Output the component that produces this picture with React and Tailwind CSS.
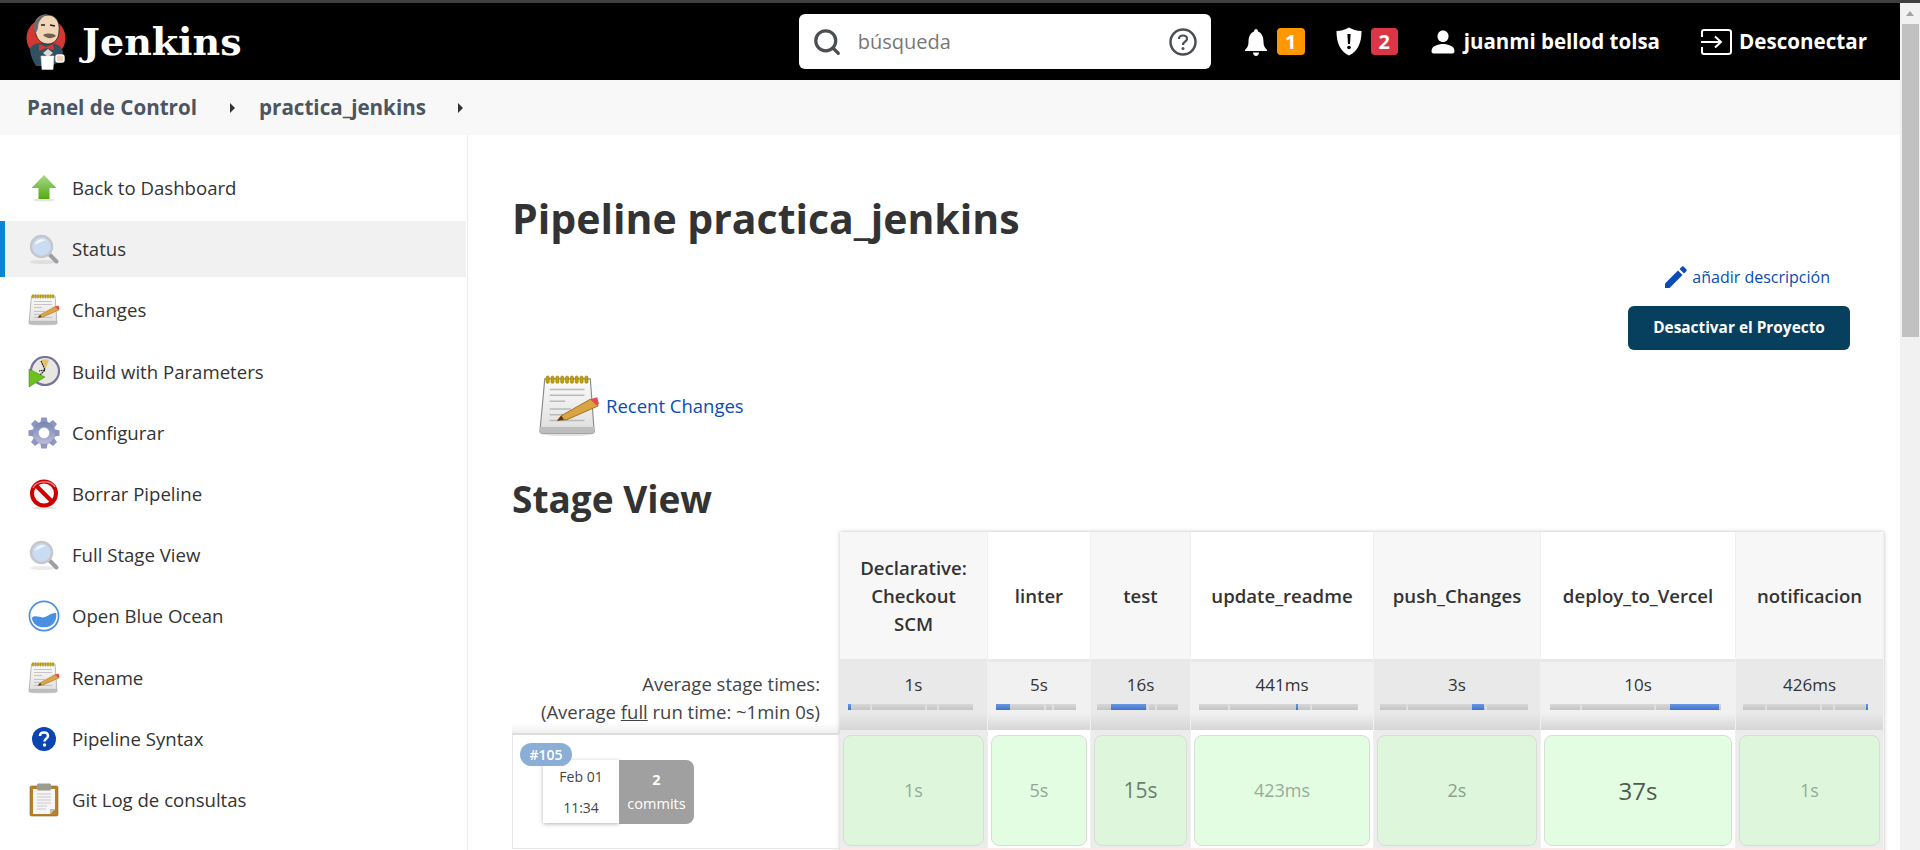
import React from "react";
import { Search } from "lucide-react";

const FONT = "font-['Open_Sans','Noto_Sans',sans-serif]";

function JenkinsLogo() {
  return (
    <svg width="40" height="56" viewBox="0 0 40 56" className="shrink-0">
      <circle cx="20" cy="24" r="19.5" fill="#d33833" />
      <path d="M4 35 C5 31 11 29 15 29 L26 29 C32 30 36 33 37 38 L36 44 C32 49 28 51 24 52 L10 52 C7 47 4 41 4 35Z" fill="#335061" />
      <path d="M9 16 C8 7 14 1 22 1 C30 1 34 8 33 17 C33 25 28 30 22 30 C15 30 10 25 9 16Z" fill="#f0d6b7" stroke="#231f20" strokeWidth="0.8" />
      <path d="M9 19 C5 7 13 -1 22 0.500 C15 3 12 8 12 14 C11 17 10 19 9 19Z" fill="#6d6b6d" />
      <path d="M24 11 L29 12 M15 11 L19 11" stroke="#231f20" strokeWidth="1.4" />
      <path d="M17 21 C21 19 27 19 30 22 C26 25 21 25 17 21Z" fill="#49372c" opacity="0.75" />
      <path d="M13 30 L20 33 L27 30 L28 36 L20 34 L13 37Z" fill="#d33833" />
      <path d="M17 39 L22 35 L27 39 L22 43Z" fill="#dcd9d8" />
      <path d="M15 42 L28 42 L27 55.500 L16 55.500Z" fill="#fff" stroke="#ddd" strokeWidth="0.6" />
      <rect x="30" y="41" width="8" height="7" rx="2" fill="#f0d6b7" stroke="#fff" strokeWidth="1.4" />
    </svg>
  );
}

function UpArrow() {
  return (
    <svg width="32" height="32" viewBox="0 0 32 32">
      <defs>
        <linearGradient id="arrowGreen" x1="0" y1="0" x2="0" y2="1">
          <stop offset="0" stopColor="#a6d98a" />
          <stop offset="1" stopColor="#56a80f" />
        </linearGradient>
      </defs>
      <path d="M16 3 L28.5 16 L21.5 16 L21.5 27 L10.5 27 L10.5 16 L3.500 16Z" fill="url(#arrowGreen)" />
      <ellipse cx="16" cy="28" rx="11" ry="1.500" fill="#000" opacity="0.1" />
    </svg>
  );
}

function Magnifier({ size = 32 }) {
  return (
    <svg width={size} height={size} viewBox="0 0 32 32">
      <ellipse cx="15" cy="29" rx="13" ry="2" fill="#000" opacity="0.08" />
      <path d="M20.5 20.5 L28.500 28.500" stroke="#9c9fa3" strokeWidth="4" strokeLinecap="round" />
      <circle cx="13.500" cy="13.500" r="10.500" fill="#c9dcf2" stroke="#c4c8cc" strokeWidth="2.500" />
      <path d="M7 12 C8 7 13 5 18 7 C14 8 10 10 7 12Z" fill="#fff" opacity="0.8" />
    </svg>
  );
}

function Notepad({ size = 32 }) {
  const rings = [5, 7.500, 10, 12.500, 15, 17.500, 20, 22.500, 25];
  return (
    <svg width={size} height={size} viewBox="0 0 32 32">
      <defs>
        <linearGradient id={"pad" + size} x1="0" y1="0" x2="0" y2="1">
          <stop offset="0" stopColor="#fbfbfb" />
          <stop offset="1" stopColor="#dedede" />
        </linearGradient>
      </defs>
      <ellipse cx="15" cy="30.500" rx="13" ry="1" fill="#000" opacity="0.12" />
      <path d="M3.500 2 L27 2 L29 29 Q29 30 28 30 L2 30 Q1 30 1 29Z" fill={"url(#pad" + size + ")"} stroke="#8c8c8c" strokeWidth="0.6" />
      <rect x="1" y="26.800" width="28" height="3.200" fill="#bdbdbd" />
      {rings.map((x) => (
        <rect key={x} x={x - 0.8} y="0.500" width="1.600" height="3.800" rx="0.800" fill="#c4a000" stroke="#8f7900" strokeWidth="0.300" />
      ))}
      <path d="M6 7.500 H24 M6 10.500 H24 M6 13.500 H14 M6 17.500 H17 M6 20.500 H13 M6 23.500 H24" stroke="#b9b9b9" strokeWidth="0.800" />
      <path d="M10 23.500 L12 21 L27 12.500 L30.500 14.500 L31 16 L15 23Z" fill="#d9a441" stroke="#8f5902" strokeWidth="0.400" />
      <path d="M27 12.500 L30.500 11.500 L31.500 15 L30 15.500Z" fill="#e5484d" />
      <path d="M10 23.500 L12 21 L13.500 23Z" fill="#4f3a1c" />
    </svg>
  );
}

function ClockPlay() {
  return (
    <svg width="32" height="32" viewBox="0 0 32 32">
      <circle cx="17" cy="15" r="14" fill="#e9e7e1" stroke="#75739a" strokeWidth="2.200" />
      <path d="M17 15 L13 4 A12 12 0 0 1 21 3.700Z" fill="#e3c36a" />
      <path d="M13 5 L17 14 L12 19 M17 14 L11 15" stroke="#222" strokeWidth="1.100" fill="none" strokeDasharray="2 0.500" />
      <path d="M1 13 L17 21 L1 31Z" fill="#6cc21d" stroke="#3f7f0c" strokeWidth="0.500" />
    </svg>
  );
}

function Gear() {
  const teeth = [0, 45, 90, 135, 180, 225, 270, 315];
  return (
    <svg width="34" height="34" viewBox="0 0 34 34">
      <defs>
        <linearGradient id="gearFill" gradientUnits="userSpaceOnUse" x1="0" y1="0" x2="0" y2="34">
          <stop offset="0" stopColor="#6479aa" />
          <stop offset="1" stopColor="#cdc7e3" />
        </linearGradient>
      </defs>
      <g fill="#8f96bf">
        {teeth.map((a) => (
          <path key={a} d="M14 0.500 H20 L21 7 H13Z" transform={`rotate(${a} 17 17)`} />
        ))}
      </g>
      <circle cx="17" cy="17" r="12" fill="url(#gearFill)" stroke="#7f86ad" strokeWidth="0.400" />
      <circle cx="17" cy="17" r="6" fill="#fff" stroke="#8f96bf" strokeWidth="0.600" />
    </svg>
  );
}

function NoEntry() {
  return (
    <svg width="32" height="32" viewBox="0 0 32 32">
      <ellipse cx="16" cy="30" rx="12" ry="1.500" fill="#000" opacity="0.1" />
      <circle cx="16" cy="15.500" r="12" fill="#f7f7f7" stroke="#cc0000" strokeWidth="4" />
      <path d="M8 7.500 L24 23.500" stroke="#cc0000" strokeWidth="4" />
      <path d="M5 10 C8 3 22 1 27 9" stroke="#f28a8a" strokeWidth="1.200" fill="none" />
    </svg>
  );
}

function Ocean() {
  return (
    <svg width="34" height="34" viewBox="0 0 34 34">
      <circle cx="17" cy="17" r="15.500" fill="#fff" stroke="#4a90e2" strokeWidth="1.800" />
      <path d="M4 19 C9 15 13 20 18 18 C23 16 26 13 30 14 C31 22 26 29 17 29 C10 29 5 25 4 19Z" fill="#4a90e2" />
    </svg>
  );
}

function HelpBlue() {
  return (
    <svg width="26" height="26" viewBox="0 0 26 26">
      <circle cx="13" cy="13" r="12" fill="#0b46b0" />
      <path d="M9 10 C9 7.500 11 6.500 13 6.500 C15.500 6.500 17 8 17 10 C17 12.500 13.500 12.500 13.500 15.500" stroke="#fff" strokeWidth="2.500" fill="none" />
      <circle cx="13.500" cy="19" r="1.700" fill="#fff" />
    </svg>
  );
}

function Clipboard() {
  return (
    <svg width="32" height="34" viewBox="0 0 32 34">
      <rect x="2" y="3" width="28" height="30" rx="1.500" fill="#b5812f" stroke="#8f6420" strokeWidth="0.600" />
      <path d="M5 6 H27 V26 L22 31 H5Z" fill="#f6f6f6" />
      <path d="M27 26 L22 31 L22 26Z" fill="#bbb" />
      <rect x="9" y="0.500" width="14" height="7" rx="1.500" fill="#9c9c90" />
      <path d="M9 11 H23 M9 14 H23 M9 17 H23 M9 20 H23 M9 23 H19 M9 26 H18" stroke="#c8c8c8" strokeWidth="1" />
    </svg>
  );
}

function BellIcon() {
  return (
    <svg width="24" height="28" viewBox="0 0 24 28" fill="#fff">
      <path d="M12 1 C13 1 14 2 14 3.500 C18 5 19.500 9 19.500 14 C19.500 18 21 20 23 22 L23 23 L1 23 L1 22 C3 20 4.500 18 4.500 14 C4.500 9 6 5 10 3.500 C10 2 11 1 12 1Z" />
      <path d="M9 24.500 H15 C15 26.500 13.500 28 12 28 C10.500 28 9 26.500 9 24.500Z" />
    </svg>
  );
}

function ShieldIcon() {
  return (
    <svg width="26" height="29" viewBox="0 0 26 29">
      <path d="M13 0.500 C16 2.500 21 3.800 25.500 4 C25.500 16 22 24 13 28.500 C4 24 0.500 16 0.500 4 C5 3.800 10 2.500 13 0.500Z" fill="#fff" />
      <path d="M11.400 7 H14.600 L14 17 H12Z" fill="#000" />
      <circle cx="13" cy="20.500" r="1.800" fill="#000" />
    </svg>
  );
}

function PersonIcon() {
  return (
    <svg width="24" height="24" viewBox="0 0 24 24" fill="#fff">
      <path d="M12 0.500 C15.300 0.500 17.500 3 17.500 6.200 C17.500 9.500 15.300 12 12 12 C8.700 12 6.500 9.500 6.500 6.200 C6.500 3 8.700 0.500 12 0.500Z" />
      <path d="M12 14 C17 14 23.500 16 23.500 21 C23.500 22.500 22.800 23.500 21.500 23.500 L2.500 23.500 C1.200 23.500 0.500 22.500 0.500 21 C0.500 16 7 14 12 14Z" />
    </svg>
  );
}

function LogoutIcon() {
  return (
    <svg width="32" height="26" viewBox="0 0 32 26" fill="none" stroke="#fff" strokeWidth="2">
      <path d="M2 8 V3 Q2 1 4 1 H28 Q31 1 31 3 V23 Q31 25 28 25 H4 Q2 25 2 23 V18" />
      <path d="M1 13 H20 M15 7.500 L21 13 L15 18.500" />
    </svg>
  );
}

function PencilIcon() {
  return (
    <svg width="22" height="22" viewBox="0 0 22 22" fill="#0b4cb4">
      <path d="M0 17.500 L13 4.500 L17.500 9 L4.500 22 L0 22Z" />
      <path d="M14.500 3 L17 0.500 Q17.800 0 18.500 0.500 L21.500 3.500 Q22 4.200 21.500 5 L19 7.500Z" />
    </svg>
  );
}

function HelpOutline() {
  return (
    <svg width="28" height="28" viewBox="0 0 28 28" fill="none" stroke="#4b4f54" strokeWidth="2.500">
      <circle cx="14" cy="14" r="12.500" />
      <path d="M10 11 C10 8.500 12 7.500 14 7.500 C16.500 7.500 18 9 18 11 C18 13.500 14 13.500 14 17" strokeWidth="2.200" />
      <circle cx="14" cy="20.500" r="1.500" fill="#4b4f54" stroke="none" />
    </svg>
  );
}

const sideItems = [
  { label: "Back to Dashboard", icon: <UpArrow /> },
  { label: "Status", icon: <Magnifier />, active: true },
  { label: "Changes", icon: <Notepad /> },
  { label: "Build with Parameters", icon: <ClockPlay /> },
  { label: "Configurar", icon: <Gear /> },
  { label: "Borrar Pipeline", icon: <NoEntry /> },
  { label: "Full Stage View", icon: <Magnifier /> },
  { label: "Open Blue Ocean", icon: <Ocean /> },
  { label: "Rename", icon: <Notepad /> },
  { label: "Pipeline Syntax", icon: <HelpBlue /> },
  { label: "Git Log de consultas", icon: <Clipboard /> },
];

// left/width of the blue part and tick positions are percent of the bar
const stages = [
  { name: ["Declarative:", "Checkout", "SCM"], width: "w-[148px]", avg: "1s", barLeft: "ml-[8px]", barWidth: "w-[125px]", fill: [0, 2.4], ticks: [17.6, 61.6, 71.2], time: "1s", textCls: "text-[18px] text-[#9aa89a]" },
  { name: ["linter"], width: "w-[103px]", avg: "5s", barLeft: "ml-[8px]", barWidth: "w-[80px]", fill: [0, 17.5], ticks: [60, 70], time: "5s", textCls: "text-[18px] text-[#94a594]" },
  { name: ["test"], width: "w-[100px]", avg: "16s", barLeft: "ml-[6px]", barWidth: "w-[81px]", fill: [17, 43], ticks: [62, 71], time: "15s", textCls: "text-[21px] text-[#6e7e6e]" },
  { name: ["update_readme"], width: "w-[183px]", avg: "441ms", barLeft: "ml-[8px]", barWidth: "w-[159px]", fill: [61, 1.4], ticks: [18, 70], time: "423ms", textCls: "text-[18px] text-[#9aab9a]" },
  { name: ["push_Changes"], width: "w-[167px]", avg: "3s", barLeft: "ml-[6px]", barWidth: "w-[148px]", fill: [62, 8], ticks: [17.6, 71], time: "2s", textCls: "text-[18px] text-[#8d9e8d]" },
  { name: ["deploy_to_Vercel"], width: "w-[195px]", avg: "10s", barLeft: "ml-[9px]", barWidth: "w-[171px]", fill: [70, 29], ticks: [17.6, 61], time: "37s", textCls: "text-[24px] text-[#4f5a4f]" },
  { name: ["notificacion"], width: "w-[148px]", avg: "426ms", barLeft: "ml-[7px]", barWidth: "w-[125px]", fill: [98.6, 1.4], ticks: [17.6, 61.6, 72], time: "1s", textCls: "text-[18px] text-[#9aaa9a]" },
];

function SideItem({ label, icon, active }) {
  return (
    <div className={`flex h-14 mb-[5.2px] items-center ${active ? "bg-[#f1f1f1] border-l-[5px] border-[#0a85d1] pl-[23px]" : "pl-[28px]"}`}>
      <span className="flex w-8 h-8 items-center justify-center shrink-0">{icon}</span>
      <span className="ml-3 text-[18.6px] text-[#333]">{label}</span>
    </div>
  );
}

function Sidebar() {
  return (
    <aside className="w-[468px] h-full shrink-0 border-r border-[#ececec] pt-[25px] pr-px">
      {sideItems.map((item) => (
        <SideItem key={item.label} {...item} />
      ))}
    </aside>
  );
}

function StageColumn({ stage, index }) {
  const odd = index % 2 === 0;
  return (
    <div className={`${stage.width} shrink-0 flex flex-col border-r border-[#f0f0f0] ${odd ? "bg-[#f7f7f7]" : "bg-white"}`}>
      <div className="h-[127px] flex flex-col items-center justify-center text-[18.6px] leading-[28px] font-semibold text-[#333] text-center">
        {stage.name.map((line) => (
          <span key={line}>{line}</span>
        ))}
      </div>
      <div className="h-[3px] bg-[#e8e8e8]" />
      <div className={`h-[68px] flex flex-col bg-gradient-to-b from-75% to-[#d6d6d6] ${odd ? "from-[#e9e9e9]" : "from-[#f1f1f1]"}`}>
        <div className="text-center text-[17px] leading-[22px] mt-[12px] text-[#333]">{stage.avg}</div>
        <div className={`relative h-[6px] mt-[8px] bg-gradient-to-b from-[#d8d8d8] to-[#c4c4c4] ${stage.barLeft} ${stage.barWidth}`}>
          {stage.ticks.map((t) => (
            <span key={t} className="absolute top-0 bottom-0 w-[2px] bg-[#dedede]" style={{ left: t + "%" }} />
          ))}
          <span
            className="absolute top-0 bottom-0 bg-gradient-to-b from-[#6a98e0] to-[#3f73cc]"
            style={{ left: stage.fill[0] + "%", width: stage.fill[1] + "%" }}
          />
        </div>
      </div>
      <div className={`pt-[5px] px-[3px] pb-[2px] ${odd ? "bg-[#ececec]" : "bg-white"}`}>
        <div className={`h-[111px] rounded-lg border border-[#d5e0d3] flex items-center justify-center ${stage.textCls} ${odd ? "bg-[#ddf6dc]" : "bg-[#e3fde2]"}`}>
          {stage.time}
        </div>
      </div>
      <div className="h-10 bg-[#fbe9e9]" />
    </div>
  );
}

function BuildInfo() {
  return (
    <div className="relative h-[116px] border-x border-b border-[#e6e6e6] border-t-2 border-t-[#dcdcdc]">
      <div className="absolute left-[7px] top-[8px] z-10 h-[23px] w-[52px] rounded-full bg-[#8aaed6] text-white text-[14px] font-semibold flex items-center justify-center">
        #105
      </div>
      <div className="flex ml-[30px] mt-[25px]">
        <div className="w-[76px] h-[63px] bg-white shadow-[0_1px_4px_rgba(0,0,0,0.3)] flex flex-col items-center justify-center text-[14px] leading-[31px] text-[#444]">
          <span>Feb 01</span>
          <span>11:34</span>
        </div>
        <div className="w-[75px] h-[64px] bg-[#a0a0a0] rounded-r-lg flex flex-col items-center justify-center text-white text-[14.5px] leading-[24px]">
          <span className="font-bold">2</span>
          <span>commits</span>
        </div>
      </div>
    </div>
  );
}

function StageView() {
  return (
    <div className="flex mt-[8px]">
      <div className="w-[328px] shrink-0">
        <div className="h-[130px]" />
        <div className="h-[71px] bg-gradient-to-b from-white from-85% to-[#f0f0f0] flex flex-col items-end justify-center pr-[20px] text-[18.5px] leading-[28px] text-[#444]">
          <span>Average stage times:</span>
          <span>
            (Average <span className="underline">full</span> run time: ~1min 0s)
          </span>
        </div>
        <BuildInfo />
      </div>
      <div className="flex shadow-[0_0_4px_rgba(0,0,0,0.25)]">
        {stages.map((stage, i) => (
          <StageColumn key={stage.name[0]} stage={stage} index={i} />
        ))}
      </div>
    </div>
  );
}

function Scrollbar() {
  return (
    <div className="w-5 h-full shrink-0 bg-[#f1f1f1] flex flex-col items-center">
      <div className="h-[21px] flex items-center">
        <span className="w-0 h-0 border-x-[4px] border-x-transparent border-b-[5px] border-b-[#a3a3a3]" />
      </div>
      <div className="w-[17px] h-[313px] bg-[#c1c1c1]" />
    </div>
  );
}

export default function App() {
  return (
    <div className={`${FONT} w-[1920px] h-[850px] overflow-hidden bg-white flex flex-col`}>
      <div className="h-[3px] bg-[#3f3f3f] shrink-0" />
      <div className="flex flex-1 min-h-0">
        <div className="flex-1 min-w-0 flex flex-col">
          <header className="h-[77px] shrink-0 bg-black flex items-center text-white">
            <div className="ml-[26px]">
              <JenkinsLogo />
            </div>
            <span className="ml-[16px] font-['DejaVu_Serif',serif] font-bold text-[38px]">Jenkins</span>
            <div className="ml-auto w-[412px] h-[55px] bg-white rounded-md flex items-center text-[#4b4f54]">
              <Search size={30} strokeWidth={2.6} className="ml-[13px]" />
              <span className="ml-[16px] text-[20px] text-[#777]">búsqueda</span>
              <span className="ml-auto mr-[14px] flex">
                <HelpOutline />
              </span>
            </div>
            <div className="ml-[33px]">
              <BellIcon />
            </div>
            <span className="ml-[9px] w-[28px] h-[27px] rounded bg-[#ff9800] flex items-center justify-center text-[20px] font-bold">1</span>
            <div className="ml-[31px]">
              <ShieldIcon />
            </div>
            <span className="ml-[9px] w-[27px] h-[27px] rounded bg-[#dc3545] flex items-center justify-center text-[20px] font-bold">2</span>
            <div className="ml-[33px]">
              <PersonIcon />
            </div>
            <span className="ml-[9px] text-[20.5px] font-bold">juanmi bellod tolsa</span>
            <div className="ml-[40px]">
              <LogoutIcon />
            </div>
            <span className="ml-[7px] mr-[33px] text-[20.6px] font-bold">Desconectar</span>
          </header>
          <nav className="h-[55px] shrink-0 bg-[#f8f8f8] flex items-center text-[20.6px] font-bold text-[#4b5563]">
            <span className="ml-[27px]">Panel de Control</span>
            <span className="ml-[33px] w-0 h-0 border-y-[5px] border-y-transparent border-l-[5px] border-l-[#333]" />
            <span className="ml-[24px]">practica_jenkins</span>
            <span className="ml-[32px] w-0 h-0 border-y-[5px] border-y-transparent border-l-[5px] border-l-[#333]" />
          </nav>
          <div className="flex flex-1 min-h-0">
            <Sidebar />
            <main className="flex-1 min-w-0 pl-[44px] pt-[49px]">
              <h1 className="text-[41px] leading-[68px] font-bold text-[#333]">Pipeline practica_jenkins</h1>
              <div className="flex justify-end pr-[70px] mt-[13px] items-center">
                <PencilIcon />
                <span className="ml-[5px] text-[16px] text-[#0b4cb4]">añadir descripción</span>
              </div>
              <div className="flex justify-end pr-[50px] mt-[17px]">
                <button className="w-[222px] h-[44px] rounded-md bg-[#073f5f] text-white text-[15.4px] font-bold">Desactivar el Proyecto</button>
              </div>
              <div className="flex items-center ml-[26px] mt-[25px]">
                <Notepad size={62} />
                <span className="ml-[6px] text-[18.5px] text-[#0b4cb4]">Recent Changes</span>
              </div>
              <h2 className="text-[37px] leading-[50px] font-bold text-[#333] mt-[37px]">Stage View</h2>
              <StageView />
            </main>
          </div>
        </div>
        <Scrollbar />
      </div>
    </div>
  );
}
